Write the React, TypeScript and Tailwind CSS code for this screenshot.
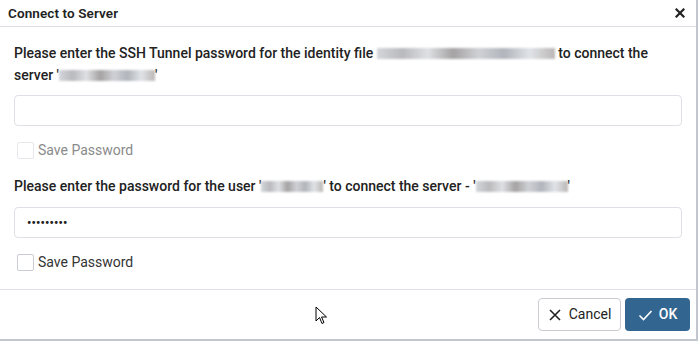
import React from "react";

function Redacted({ w }: { w: number }) {
  return (
    <span
      className="inline-block align-[-1px] h-[11px] bg-[linear-gradient(90deg,#c9ccd2,#a9a9ad,#d7d9de,#8f8c8c,#c4c6cc,#9ea3ab,#d9dde2,#aaa6a4)] blur-[1px] opacity-80"
      style={{ width: w }}
    />
  );
}

export default function App() {
  return (
    <div className="w-[700px] h-[343px] bg-white font-['Roboto',sans-serif] text-[#222222] relative">
      <div className="w-[698px] h-[341px] border-r-2 border-b-2 border-[#c3c6cc] flex flex-col">
        <div className="h-[27px] flex items-center justify-between pl-2 pr-[11px] border-b border-[#dde0e6] shrink-0">
          <span className="text-[13.5px] font-semibold tracking-[0.1px]">Connect to Server</span>
          <svg width="10" height="10" viewBox="0 0 10 10" className="mt-[-1px]">
            <path d="M1.5 1.5 L8.5 8.5 M8.5 1.5 L1.5 8.5" stroke="#222" strokeWidth="2.2" strokeLinecap="square" />
          </svg>
        </div>
        <div className="flex-1 px-[14px] pt-[15px] flex flex-col">
          <p className="text-[14px] font-medium leading-[22px] pr-3">
            Please enter the SSH Tunnel password for the identity file <Redacted w={178} /> to connect the server '<Redacted w={96} />'
          </p>
          <div className="mt-[9px] h-[31px] w-[668px] border border-[#dde0e6] rounded-[4px]" />
          <label className="mt-[14px] ml-[3px] flex items-center gap-[4px] text-[14px] text-[#8a8a8a]">
            <span className="w-[17px] h-[17px] border border-[#e6e8ec] rounded-[2px]" />
            Save Password
          </label>
          <p className="mt-[14px] text-[14px] font-medium leading-[22px]">
            Please enter the password for the user '<Redacted w={62} />' to connect the server - '<Redacted w={92} />'
          </p>
          <div className="mt-[10px] h-[31px] w-[668px] border border-[#dde0e6] rounded-[4px] flex items-center pl-[12px] text-[12px] tracking-[0.2px] font-bold leading-none">
            •••••••••
          </div>
          <label className="mt-[14px] ml-[3px] flex items-center gap-[4px] text-[14px] text-[#333333]">
            <span className="w-[17px] h-[17px] border border-[#c9ccd3] rounded-[2px]" />
            Save Password
          </label>
        </div>
        <div className="h-[50px] border-t border-[#dde0e6] flex items-center justify-end gap-[4px] pr-[6px] shrink-0">
          <button className="h-[33px] w-[83px] border border-[#c9ccd3] rounded-[4px] flex items-center justify-center gap-[7px] text-[14px] text-[#222] bg-white">
            <svg width="14" height="14" viewBox="0 0 14 14">
              <path d="M2 2 L12 12 M12 2 L2 12" stroke="#222" strokeWidth="1.6" />
            </svg>
            Cancel
          </button>
          <button className="h-[33px] w-[65px] rounded-[4px] bg-[#326690] flex items-center justify-center gap-[6px] text-[14px] font-medium text-white">
            <svg width="15" height="12" viewBox="0 0 15 12">
              <path d="M1.5 6.5 L5.5 10.5 L13.5 2" stroke="#fff" strokeWidth="1.6" fill="none" />
            </svg>
            OK
          </button>
        </div>
      </div>
      <svg className="absolute left-[315px] top-[306px]" width="13" height="20" viewBox="0 0 13 20">
        <path d="M1 1 L1 15 L4.5 11.5 L7 17.5 L9 16.5 L6.5 11 L11.5 11 Z" fill="#fff" stroke="#000" strokeWidth="1" strokeLinejoin="round" />
      </svg>
    </div>
  );
}
